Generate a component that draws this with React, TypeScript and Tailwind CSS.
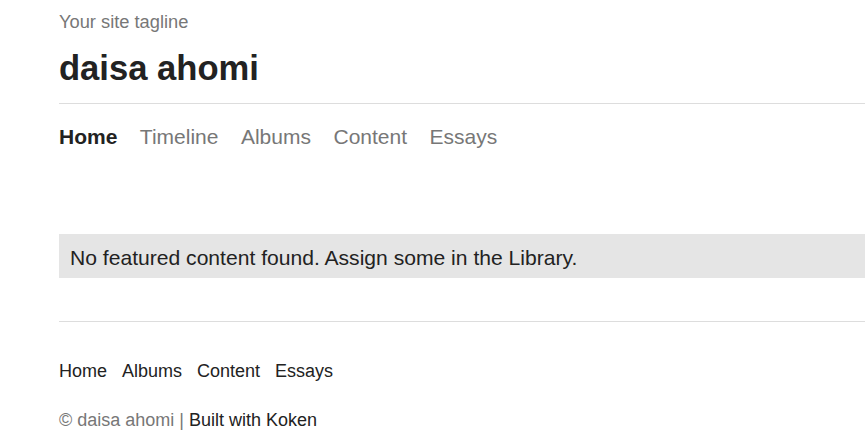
export default function App() {
    const nav = ['Timeline', 'Albums', 'Content', 'Essays'];
    const footerNav = ['Home', 'Albums', 'Content', 'Essays'];

    return (
        <div className="min-h-screen bg-white pl-[59px] font-['Liberation_Sans',Arial,sans-serif] text-[#222]">
            {/* Header */}
            <header>
                <div className="pt-[10px] text-[18.3px] leading-[24px] text-[#777]">Your site tagline</div>
                <h1 className="mt-[14px] text-[34.6px] font-bold leading-[40px] text-[#222]">daisa ahomi</h1>
                <hr className="mt-[15px] border-t border-[#ddd]" />
                <nav className="mt-[19px] flex gap-[22.5px] text-[21px] leading-[28px]">
                    <a className="font-bold text-[#222]">Home</a>
                    {nav.map((item) => (
                        <a key={item} className="text-[#777]">{item}</a>
                    ))}
                </nav>
            </header>

            {/* Featured */}
            <div className="mt-[83px] h-[44px] bg-[#e5e5e5] px-[11px] pt-[10px] text-[21.1px] leading-[28px] text-[#222]">
                No featured content found. Assign some in the Library.
            </div>

            {/* Footer */}
            <footer>
                <hr className="mt-[43px] border-t border-[#ddd]" />
                <nav className="mt-[37px] flex gap-[15px] text-[18px] leading-[24px] text-[#222]">
                    {footerNav.map((item) => (
                        <a key={item}>{item}</a>
                    ))}
                </nav>
                <div className="mt-[25px] text-[18px] leading-[24px] text-[#777]">
                    © daisa ahomi | <a className="text-[#222]">Built with Koken</a>
                </div>
            </footer>
        </div>
    );
}
